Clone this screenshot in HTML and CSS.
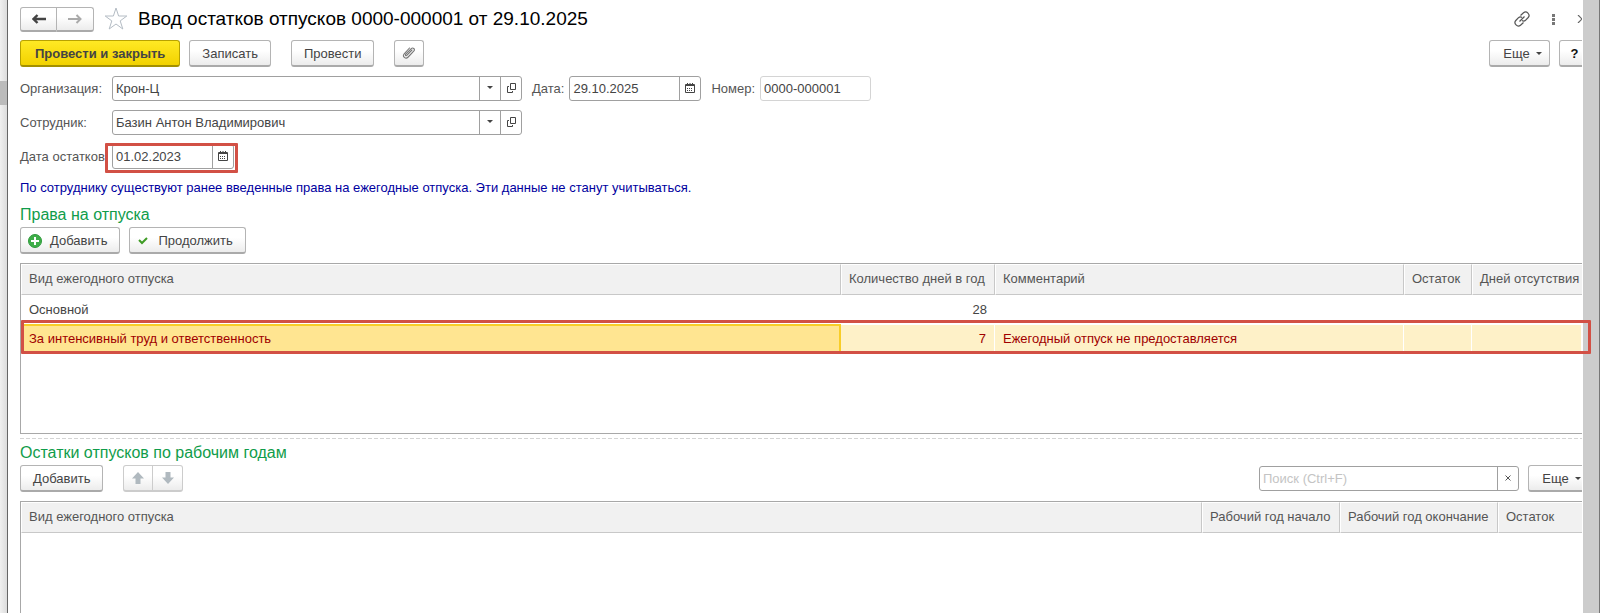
FILE: index.html
```html
<!DOCTYPE html>
<html lang="ru">
<head>
    <meta charset="UTF-8">
    <meta name="viewport" content="width=device-width, initial-scale=1.0">
    <title>Ввод остатков отпусков</title>
    <link rel="stylesheet" href="styles.css">
</head>
<body>

<div class="side-strip"><div class="side-thumb"></div></div>

<main class="window">
    <header class="title-bar">
        <div class="button-group nav-group">
            <button type="button" class="btn" aria-label="Назад">
                <svg width="14" height="10" viewBox="0 0 14 10"><path d="M5.500 1L1.500 5L5.500 9M2 5H14" fill="none" stroke="#444" stroke-width="2.400"/></svg>
            </button>
            <button type="button" class="btn" aria-label="Вперед">
                <svg width="14" height="10" viewBox="0 0 14 10"><path d="M8.500 1L12.500 5L8.500 9M12 5H0" fill="none" stroke="#aaa" stroke-width="2"/></svg>
            </button>
        </div>
        <button type="button" class="icon-btn star" aria-label="В избранное">
            <svg width="24" height="24" viewBox="0 0 24 24"><path d="M12 1L14.600 9H22.800L16.200 13.900L18.800 22L12 17L5.200 22L7.800 13.900L1.200 9H9.400Z" fill="#fff" stroke="#b4bcc4"/></svg>
        </button>
        <h1>Ввод остатков отпусков 0000-000001 от 29.10.2025</h1>
        <div class="window-tools">
            <button type="button" class="icon-btn" aria-label="Ссылка">
                <svg width="16" height="16" viewBox="0 0 16 16"><g fill="none" stroke="#555" stroke-width="1.200"><path d="M6.500 4.500L9.500 1.800C12.500 -.8 16.800 3.500 14.200 6.500L11.500 9.300C10.500 10.200 9 10.200 8 9.500"/><path d="M9.500 11.500L6.500 14.200C3.500 16.800 -.8 12.500 1.800 9.500L4.500 6.700C5.500 5.800 7 5.800 8 6.500M5.500 10.500L10.500 5.500"/></g></svg>
            </button>
            <button type="button" class="icon-btn" aria-label="Меню">
                <svg width="3" height="11" viewBox="0 0 3 11"><path d="M0 0h3v3H0zM0 4h3v3H0zM0 8h3v3H0z" fill="#777"/></svg>
            </button>
            <button type="button" class="icon-btn" aria-label="Закрыть">
                <svg width="10" height="8" viewBox="0 0 10 8"><path d="M1 0L9 8M9 0L1 8" stroke="#666" stroke-width="1.200"/></svg>
            </button>
        </div>
    </header>

    <div class="toolbar command-bar">
        <button type="button" class="btn btn-main">Провести и закрыть</button>
        <button type="button" class="btn">Записать</button>
        <button type="button" class="btn spaced">Провести</button>
        <button type="button" class="btn btn-clip spaced" aria-label="Файлы">
            <svg width="14" height="14" viewBox="0 0 14 14"><path d="M10 4L5 9.200C4 10.400 2.800 9.300 3.800 8.200L9 2.800C11 .8 13.500 3.200 11.700 5.200L6.200 11C3.600 13.700 0 10.500 2.200 7.800L7.500 2" fill="none" stroke="#777" stroke-width="1.100" stroke-linecap="round"/></svg>
        </button>
        <button type="button" class="btn btn-more push">Еще <span class="caret"></span></button>
        <button type="button" class="btn btn-help">?</button>
    </div>

    <form class="fields">
        <div class="field-row">
            <label for="org" class="first-label">Организация:</label>
            <div class="field field-wide">
                <input type="text" id="org" value="Крон-Ц">
                <button type="button" aria-label="Выбрать"><span class="caret"></span></button>
                <button type="button" aria-label="Открыть"><svg width="9" height="10" viewBox="0 0 9 10"><path d="M3.500 .5h5v6h-5zM2 3.500H.5v6h5V8" fill="none" stroke="#444"/></svg></button>
            </div>
            <label for="doc_date" class="near-label">Дата:</label>
            <div class="field field-date">
                <input type="text" id="doc_date" value="29.10.2025">
                <button type="button" aria-label="Календарь"><svg width="10" height="10" viewBox="0 0 10 10"><path d="M.5 1.500h9v8h-9zM.5 2.500h9M2.500 0v2M5 0v2M7.500 0v2" fill="none" stroke="#444"/><path d="M2 5.500h6M2 7.500h6" stroke="#444" stroke-dasharray="1 1"/></svg></button>
            </div>
            <label for="doc_number" class="near-label">Номер:</label>
            <div class="field field-number">
                <input type="text" id="doc_number" value="0000-000001" readonly>
            </div>
        </div>
        <div class="field-row">
            <label for="employee" class="first-label">Сотрудник:</label>
            <div class="field field-wide">
                <input type="text" id="employee" value="Базин Антон Владимирович">
                <button type="button" aria-label="Выбрать"><span class="caret"></span></button>
                <button type="button" aria-label="Открыть"><svg width="9" height="10" viewBox="0 0 9 10"><path d="M3.500 .5h5v6h-5zM2 3.500H.5v6h5V8" fill="none" stroke="#444"/></svg></button>
            </div>
        </div>
        <div class="field-row">
            <label for="rest_date" class="first-label">Дата остатков:</label>
            <div class="field field-rest">
                <input type="text" id="rest_date" value="01.02.2023">
                <button type="button" aria-label="Календарь"><svg width="10" height="10" viewBox="0 0 10 10"><path d="M.5 1.500h9v8h-9zM.5 2.500h9M2.500 0v2M5 0v2M7.500 0v2" fill="none" stroke="#444"/><path d="M2 5.500h6M2 7.500h6" stroke="#444" stroke-dasharray="1 1"/></svg></button>
                <div class="mark mark-field"></div>
            </div>
        </div>
    </form>

    <p class="notice">По сотруднику существуют ранее введенные права на ежегодные отпуска. Эти данные не станут учитываться.</p>

    <h2>Права на отпуска</h2>
    <div class="toolbar">
        <button type="button" class="btn btn-icon">
            <svg width="14" height="14" viewBox="0 0 14 14"><circle cx="7" cy="7" r="6.500" fill="#3fae49" stroke="#2f9a3c"/><path d="M7 3v8M3 7h8" stroke="#fff" stroke-width="2"/></svg>
            Добавить
        </button>
        <button type="button" class="btn btn-icon btn-continue">
            <svg width="10" height="8" viewBox="0 0 10 8"><path d="M1 3L4 6L9 1" fill="none" stroke="#3f9c25" stroke-width="2"/></svg>
            Продолжить
        </button>
    </div>

    <div class="grid grid-rights">
        <table>
            <colgroup>
                <col>
                <col class="col-days">
                <col class="col-comment">
                <col class="col-rest">
                <col class="col-absence">
            </colgroup>
            <thead>
                <tr>
                    <th>Вид ежегодного отпуска</th>
                    <th>Количество дней в год</th>
                    <th>Комментарий</th>
                    <th>Остаток</th>
                    <th>Дней отсутствия</th>
                </tr>
            </thead>
            <tbody>
                <tr>
                    <td>Основной</td>
                    <td class="num">28</td>
                    <td></td>
                    <td></td>
                    <td></td>
                </tr>
                <tr class="selected">
                    <td class="current">За интенсивный труд и ответственность<div class="mark mark-row"></div></td>
                    <td class="num">7</td>
                    <td>Ежегодный отпуск не предоставляется</td>
                    <td></td>
                    <td></td>
                </tr>
            </tbody>
        </table>
    </div>

    <div class="splitter"></div>

    <h2 class="years-title">Остатки отпусков по рабочим годам</h2>
    <div class="toolbar">
        <button type="button" class="btn">Добавить</button>
        <div class="button-group move-group spaced">
            <button type="button" class="btn" aria-label="Вверх">
                <svg width="12" height="12" viewBox="0 0 12 12"><path d="M6 0L12 6.500H8.500V12H3.500V6.500H0Z" fill="#b0b9bf"/></svg>
            </button>
            <button type="button" class="btn" aria-label="Вниз">
                <svg width="12" height="12" viewBox="0 0 12 12"><path d="M6 12L12 5.500H8.500V0H3.500V5.500H0Z" fill="#b0b9bf"/></svg>
            </button>
        </div>
        <div class="field field-search push">
            <input type="text" placeholder="Поиск (Ctrl+F)" aria-label="Поиск">
            <button type="button" aria-label="Очистить"><svg width="6" height="6" viewBox="0 0 6 6"><path d="M.5 .5L5.500 5.500M5.500 .5L.5 5.500" stroke="#555"/></svg></button>
        </div>
        <button type="button" class="btn btn-more btn-edge">Еще <span class="caret"></span></button>
    </div>

    <div class="grid grid-years">
        <table>
            <colgroup>
                <col>
                <col class="col-start">
                <col class="col-end">
                <col class="col-year-rest">
            </colgroup>
            <thead>
                <tr>
                    <th>Вид ежегодного отпуска</th>
                    <th>Рабочий год начало</th>
                    <th>Рабочий год окончание</th>
                    <th>Остаток</th>
                </tr>
            </thead>
        </table>
    </div>
</main>

<div class="scroll-gutter"></div>

</body>
</html>
```

FILE: styles.css
```css
* {
    box-sizing: border-box;
}
body {
    margin: 0;
    display: flex;
    height: 100vh;
    overflow: hidden;
    background: #fff;
    color: #444;
    font-family: "Liberation Sans", Arial, sans-serif;
    font-size: 13px;
    line-height: 16px;
}
input, button {
    font: inherit;
    color: inherit;
}
button {
    cursor: pointer;
}
svg {
    display: block;
    flex: none;
}

/* page edges */
.side-strip {
    flex: none;
    width: 8px;
    padding-top: 81px;
    background: linear-gradient(to right, #f0f0f0, #dcdcdc);
    border-right: 1px solid #666;
}
.side-thumb {
    height: 24px;
    background: #bbb;
}
.scroll-gutter {
    flex: none;
    width: 17px;
    background: #ccc;
    border-right: 1px solid #777;
}
.window {
    flex: 1;
    min-width: 0;
    display: flex;
    flex-direction: column;
    padding: 6px 1px 0 12px;
}

/* title */
.title-bar {
    display: flex;
    align-items: center;
    height: 26px;
    overflow: clip;
}
h1 {
    margin: 0 0 0 10px;
    font-size: 19px;
    font-weight: normal;
    line-height: 24px;
    color: #000;
    white-space: nowrap;
}
.icon-btn {
    padding: 0;
    border: none;
    background: none;
}
.star {
    margin-left: 10px;
}
.window-tools {
    display: flex;
    align-items: center;
    gap: 22px;
    margin-left: auto;
    margin-right: -5px;
}

/* buttons */
.toolbar {
    display: flex;
    align-items: center;
    gap: 9px;
    flex: none;
    overflow-x: clip;
}
.command-bar {
    margin-top: 8px;
}
.btn {
    display: flex;
    align-items: center;
    justify-content: center;
    flex: none;
    height: 27px;
    padding: 1px 12px 0;
    border: 1px solid #b4b4b4;
    border-bottom: 2px solid #aaa;
    border-radius: 3px;
    background: linear-gradient(#fff 40%, #ececec);
    white-space: nowrap;
}
.btn-main {
    padding: 1px 14px 0;
    border-color: #b8a200;
    border-bottom-color: #a39000;
    background: linear-gradient(#ffe924, #f2d200);
    font-weight: bold;
}
.btn-clip {
    width: 30px;
    padding: 0;
}
.btn-more {
    width: 61px;
    gap: 6px;
    padding: 1px 0 0 6px;
}
.btn-help {
    width: 31px;
    margin-right: -8px;
    padding: 1px 0 0;
    font-weight: bold;
    color: #111;
}
.btn-edge {
    margin-right: -7px;
}
.btn-icon {
    gap: 8px;
    padding: 1px 12px 0 7px;
}
.btn-continue {
    gap: 10px;
    padding-left: 8px;
}
.spaced {
    margin-left: 11px;
}
.push {
    margin-left: auto;
}
.caret {
    border: 3px solid transparent;
    border-top-color: #444;
    border-bottom: none;
}
.button-group {
    display: flex;
    flex: none;
}
.button-group .btn {
    padding: 0;
}
.button-group .btn:first-child {
    border-radius: 3px 0 0 3px;
}
.button-group .btn:last-child {
    border-left: none;
    border-radius: 0 3px 3px 0;
}
.nav-group .btn {
    width: 37px;
    height: 25px;
}
.move-group .btn {
    width: 30px;
    border-color: #ccc;
}

/* form fields */
.fields {
    display: flex;
    flex-direction: column;
    gap: 9px;
    margin-top: 9px;
}
.field-row {
    display: flex;
    align-items: center;
    gap: 10px;
}
.field-row label {
    color: #555;
    white-space: nowrap;
}
.field-row .first-label {
    width: 82px;
}
.near-label {
    margin-right: -5px;
}
.field {
    position: relative;
    display: flex;
    height: 25px;
    border: 1px solid #a0a0a0;
    border-radius: 3px;
    background: #fff;
}
.field input {
    flex: 1;
    min-width: 0;
    padding: 0 3px;
    border: none;
    outline: none;
    background: none;
}
.field input::placeholder {
    color: #c4c4c4;
}
.field button {
    display: flex;
    align-items: center;
    justify-content: center;
    flex: none;
    width: 21px;
    padding: 0 0 2px;
    border: none;
    border-left: 1px solid #a0a0a0;
    background: none;
}
.field-wide {
    width: 410px;
}
.field-date {
    width: 132px;
}
.field-number {
    width: 111px;
    border-color: #d4d4d4;
}
.field-rest {
    width: 122px;
}
.field-search {
    width: 260px;
}

/* red frames over the field and the row */
.mark {
    position: absolute;
    border: 3px solid #d25045;
    border-radius: 1px;
    pointer-events: none;
}
.mark-field {
    inset: -2px -5px -5px -8px;
}
.mark-row {
    inset: -4px -9px -1px 0;
}

.notice {
    margin: 11px 0 0;
    color: #0000a0;
}
h2 {
    margin: 9px 0 2px;
    font-size: 16px;
    font-weight: normal;
    line-height: 20px;
    color: #109c4a;
}
.years-title {
    margin-top: 4px;
}

/* tables */
.grid {
    margin-top: 9px;
    border-top: 1px solid #a8a8a8;
    border-left: 1px solid #a8a8a8;
}
.grid-rights {
    flex: none;
    min-height: 171px;
    border-bottom: 1px solid #a8a8a8;
}
.grid-years {
    flex: 1;
}
table {
    width: 100%;
    table-layout: fixed;
    border-collapse: separate;
    border-spacing: 0;
}
th, td {
    height: 29px;
    padding: 0 8px;
    text-align: left;
    white-space: nowrap;
}
th {
    height: 31px;
    padding: 0 7px 2px;
    border: 1px solid #fff;
    border-right-color: #c8c8c8;
    border-bottom-color: #c8c8c8;
    background: #f1f1f1;
    font-weight: normal;
    color: #555;
}
th:last-child {
    border-right: none;
    padding-right: 0;
}
.num {
    text-align: right;
}
.col-days {
    width: 154px;
}
.col-comment {
    width: 409px;
}
.col-rest {
    width: 68px;
}
.col-absence {
    width: 110px;
}
.col-start {
    width: 138px;
}
.col-end {
    width: 158px;
}
.col-year-rest {
    width: 84px;
}
.selected {
    position: relative;
    color: #a00000;
}
.selected td {
    border: 1px solid #fff;
    border-width: 1px 1px 1px 0;
    background: #fef1c8;
}
.selected .current {
    border: 2px solid #f8cd28;
    padding-left: 6px;
    background: #ffe591;
}
.splitter {
    flex: none;
    height: 1px;
    margin-top: 4px;
    background: repeating-linear-gradient(to right, #d4d4d4 0 4px, #fff 4px 6px);
}
```
